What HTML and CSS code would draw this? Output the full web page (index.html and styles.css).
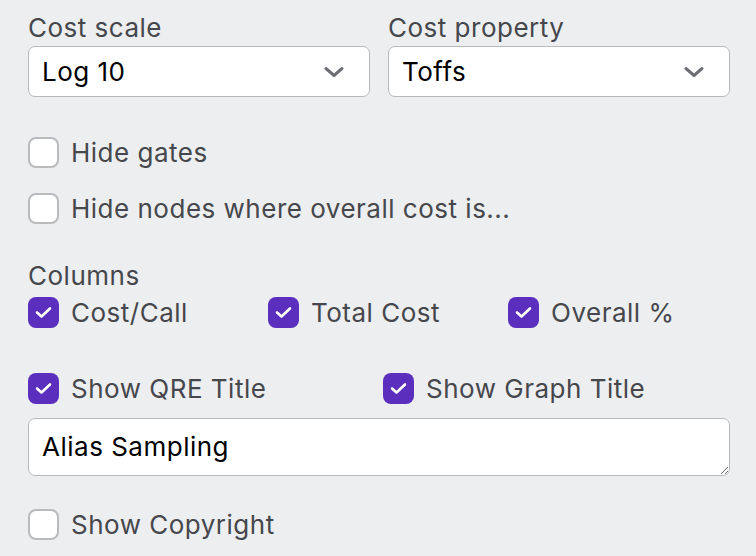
FILE: index.html
```html
<!DOCTYPE html>
<html lang="en">
<head>
<meta charset="utf-8">
<title>Graph settings</title>
<link rel="stylesheet" href="styles.css">
</head>
<body>
<main class="panel">
  <div class="pair">
    <div class="field">
      <div class="label">Cost scale</div>
      <div class="select">
        <span>Log 10</span>
        <svg class="chevron" width="22" height="14" viewBox="0 0 22 14"><path d="M3 3.5 L11 10.5 L19 3.5" /></svg>
      </div>
    </div>
    <div class="field">
      <div class="label">Cost property</div>
      <div class="select">
        <span>Toffs</span>
        <svg class="chevron" width="22" height="14" viewBox="0 0 22 14"><path d="M3 3.5 L11 10.5 L19 3.5" /></svg>
      </div>
    </div>
  </div>

  <label class="check first">
    <span class="box"></span>
    <span>Hide gates</span>
  </label>
  <label class="check second">
    <span class="box"></span>
    <span>Hide nodes where overall cost is...</span>
  </label>

  <div class="label columns-label">Columns</div>
  <div class="columns">
    <label class="check">
      <span class="box on"><svg viewBox="0 0 31 31"><path d="M9 15.5 L13.5 19.5 L22 11.5" /></svg></span>
      <span>Cost/Call</span>
    </label>
    <label class="check">
      <span class="box on"><svg viewBox="0 0 31 31"><path d="M9 15.5 L13.5 19.5 L22 11.5" /></svg></span>
      <span>Total Cost</span>
    </label>
    <label class="check">
      <span class="box on"><svg viewBox="0 0 31 31"><path d="M9 15.5 L13.5 19.5 L22 11.5" /></svg></span>
      <span>Overall %</span>
    </label>
  </div>

  <div class="titles">
    <label class="check">
      <span class="box on"><svg viewBox="0 0 31 31"><path d="M9 15.5 L13.5 19.5 L22 11.5" /></svg></span>
      <span>Show QRE Title</span>
    </label>
    <label class="check">
      <span class="box on"><svg viewBox="0 0 31 31"><path d="M9 15.5 L13.5 19.5 L22 11.5" /></svg></span>
      <span>Show Graph Title</span>
    </label>
  </div>

  <textarea class="title-input">Alias Sampling</textarea>

  <label class="check copyright">
    <span class="box"></span>
    <span>Show Copyright</span>
  </label>
</main>
</body>
</html>
```

FILE: styles.css
```css
html, body {
  margin: 0;
  padding: 0;
  background: #edeef0;
}

body {
  font-family: Inter, "Noto Sans", "Liberation Sans", sans-serif;
  font-size: 26px;
  line-height: 31px;
  letter-spacing: 0.5px;
  color: #46474c;
  overflow: hidden;
}

.panel {
  display: flex;
  flex-direction: column;
  padding: 12px 26px 0 28px;
}

.pair {
  display: grid;
  grid-template-columns: 1fr 1fr;
  column-gap: 18px;
}

.label {
  line-height: 31px;
}

.select {
  margin-top: 3px;
  height: 51px;
  box-sizing: border-box;
  display: flex;
  align-items: center;
  justify-content: space-between;
  padding: 0 24px 0 13px;
  background: #fff;
  border: 1px solid #b8b9bb;
  border-radius: 7px;
  color: #000;
}

.chevron path {
  fill: none;
  stroke: #6d6f75;
  stroke-width: 3;
  stroke-linecap: round;
  stroke-linejoin: round;
}

.check {
  display: flex;
  align-items: center;
  gap: 12px;
  height: 31px;
}

.box {
  flex: none;
  width: 31px;
  height: 31px;
  box-sizing: border-box;
  border: 2px solid #b9babc;
  border-radius: 8px;
  background: #fff;
}

.box.on {
  border: none;
  background: #5b2ebd;
}

.box svg {
  display: block;
  width: 31px;
  height: 31px;
}

.box svg path {
  fill: none;
  stroke: #fff;
  stroke-width: 2.6;
  stroke-linecap: round;
  stroke-linejoin: round;
}

.first {
  margin-top: 40px;
}

.second {
  margin-top: 25px;
}

.columns-label {
  margin-top: 36px;
}

.columns {
  margin-top: 6px;
  display: grid;
  grid-template-columns: repeat(3, 1fr);
  column-gap: 18px;
}

.titles {
  margin-top: 45px;
  display: grid;
  grid-template-columns: 355px 1fr;
}

.title-input {
  margin-top: 14px;
  height: 58px;
  box-sizing: border-box;
  padding: 12px 13px;
  font: inherit;
  line-height: 31px;
  letter-spacing: 0.5px;
  color: #000;
  background: #fff;
  border: 1px solid #b8b9bb;
  border-radius: 7px;
  resize: vertical;
  outline: none;
}

.copyright {
  margin-top: 33px;
}
```
